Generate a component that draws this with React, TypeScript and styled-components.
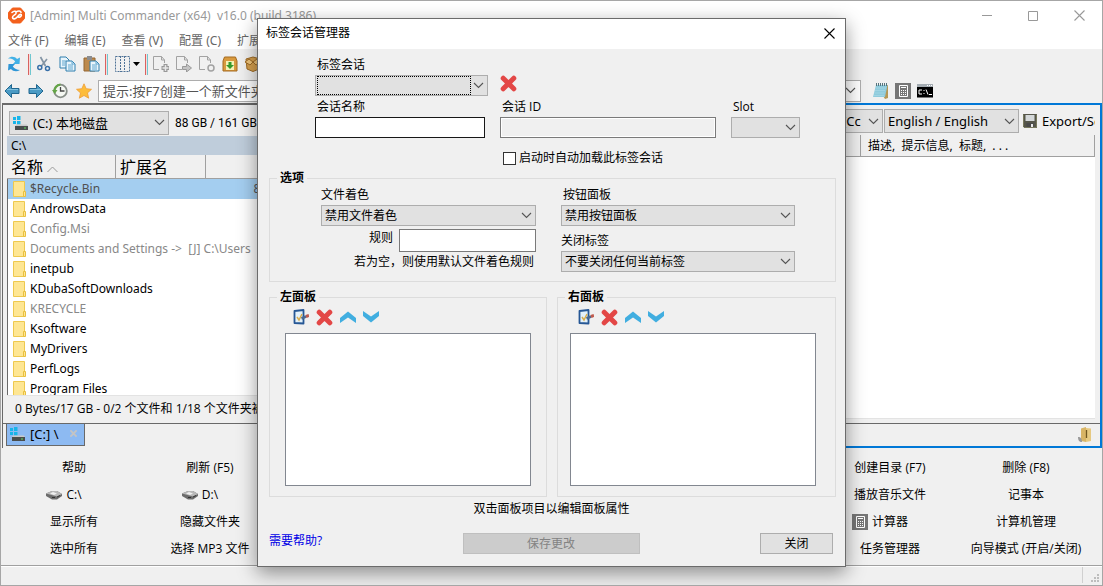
import React from "react";
import styled, { createGlobalStyle, css } from "styled-components";

const latin = '"Noto Sans", "Noto Sans CJK SC", sans-serif';
const narrow = '"Open Sans", "Noto Sans CJK SC", sans-serif';

const GlobalStyle = createGlobalStyle`
  * { box-sizing: border-box; }
  body { margin: 0; background: #f0f0f0; font: 12px/16px ${narrow}; color: #000; }
  button, input, select { font: inherit; color: inherit; margin: 0; border-radius: 0; }
  svg { display: block; flex: none; }
`;

/* ---------- main window ---------- */

const Window = styled.div`
  position: relative;
  display: flex;
  flex-direction: column;
  height: 100vh;
  min-height: 580px;
  overflow: hidden;
  border: 1px solid #a6a6a6;
  background: #f0f0f0;
`;

const TitleBar = styled.header`
  display: flex;
  align-items: center;
  height: 29px;
  padding-left: 7px;
  gap: 5px;
  background: #fff;
  color: #999;
  font: 12px/18px ${latin};
  white-space: pre;
`;

const Caption = styled.span`
  flex: 1;
`;

const WindowButtons = styled.div`
  display: flex;
`;

const WindowButton = styled.button`
  display: grid;
  place-items: center;
  width: 46px;
  height: 29px;
  padding: 0;
  border: 0;
  background: none;
`;

const MenuBar = styled.nav`
  display: flex;
  align-items: center;
  gap: 16px;
  height: 19px;
  padding: 2px 0 0 7px;
  background: #fff;
`;

const MenuItem = styled.button`
  padding: 0;
  border: 0;
  background: none;
  color: #666;
  font: 12px/16px ${latin};
  white-space: nowrap;
`;

const Toolbar = styled.div`
  display: flex;
  align-items: center;
  height: 28px;
  padding: 2px 0 0 4px;
  gap: 7px;
`;

const AddressBar = styled.div`
  display: flex;
  align-items: center;
  gap: 6px;
  height: 26px;
  padding: 1px 169px 0 3px;
`;

const NavButtons = styled.div`
  display: flex;
  gap: 8px;
`;

const ToolButton = styled.button<{ $height?: number }>`
  display: flex;
  align-items: center;
  flex: none;
  gap: 2px;
  height: ${(p) => (p.$height ? `${p.$height}px` : "auto")};
  padding: 0;
  border: 0;
  background: none;
`;

const ToolSeparator = styled.span`
  width: 3px;
  height: 21px;
  margin: 0 -2px;
  border-left: 1px solid #d9625f;
  border-right: 1px solid #6fc7d0;
  background: #f8dcdc;
`;

const AddressField = styled.div`
  display: flex;
  align-items: center;
  flex: 1;
  height: 22px;
  margin-right: 6px;
  padding-right: 4px;
  border: 1px solid #adadad;
  background: #fff;
`;

const AddressInput = styled.input`
  flex: 1;
  min-width: 0;
  padding: 0 4px;
  border: 0;
  outline: 0;
  color: #555;
  font: 13px/18px ${latin};
`;

/* ---------- drop-down ---------- */

const SelectFrame = styled.span<{ $width?: string }>`
  display: grid;
  align-items: center;
  flex: none;
  width: ${(p) => p.$width ?? "100%"};
  & > * { grid-area: 1 / 1; }
  & > svg { justify-self: end; margin-right: 4px; pointer-events: none; }
`;

const SelectBox = styled.select<{ $tall?: boolean; $indent?: number }>`
  appearance: none;
  width: 100%;
  height: ${(p) => (p.$tall ? 24 : 21)}px;
  padding: 0 18px 0 ${(p) => p.$indent ?? 3}px;
  border: 1px solid #adadad;
  background: #e1e1e1;
  outline: 0;
`;

const FocusMark = styled.span`
  align-self: stretch;
  margin: 1px 17px 1px 2px;
  border: 1px dotted #000;
  pointer-events: none;
`;

const DriveMark = styled.span`
  justify-self: start;
  margin-left: 4px;
  pointer-events: none;
`;

/* ---------- file panels ---------- */

const Panels = styled.main`
  display: flex;
  flex: 1;
  min-height: 0;
  padding-left: 1px;
`;

const Panel = styled.section<{ $active?: boolean }>`
  display: flex;
  flex: 1 1 0;
  flex-direction: column;
  min-width: 0;
  ${(p) =>
    p.$active
      ? css`border: 2px solid #0078d7;`
      : css`border: solid #696969; border-width: 2px 0 0 1px;`}
`;

const PanelTools = styled.div<{ $end?: boolean }>`
  display: flex;
  align-items: center;
  justify-content: ${(p) => (p.$end ? "flex-end" : "flex-start")};
  gap: ${(p) => (p.$end ? 1 : 6)}px;
  flex: none;
  height: ${(p) => (p.$end ? 30 : 31)}px;
  padding: ${(p) => (p.$end ? "2px 5px 0 0" : "4px 0 0 6px")};
  overflow: hidden;
  font: 13px/18px ${latin};
  white-space: nowrap;
`;

const FreeSpace = styled.span`
  font: 12px/16px Roboto, "Noto Sans CJK SC", sans-serif;
`;

const ExportButton = styled.button`
  display: flex;
  align-items: center;
  gap: 5px;
  width: 75px;
  padding: 0 0 0 3px;
  border: 0;
  background: none;
  overflow: hidden;
  white-space: nowrap;
`;

const PathBar = styled.div`
  flex: none;
  height: 19px;
  margin-left: 4px;
  padding-left: 4px;
  background: #bfcddb;
  font: 12px/19px ${latin};
`;

const ListArea = styled.div<{ $plain?: boolean }>`
  flex: 1;
  min-height: 0;
  overflow: hidden;
  margin: ${(p) => (p.$plain ? "0 5px 4px 4px" : "0 0 0 4px")};
  background: #fff;
  border-bottom: 1px solid #e3e3e3;
`;

const FileTable = styled.table`
  width: 100%;
  table-layout: fixed;
  border-collapse: separate;
  border-spacing: 0;
  font: 12px/18px ${latin};
`;

const HeadCell = styled.th<{ $width?: number; $small?: boolean }>`
  width: ${(p) => (p.$width ? `${p.$width}px` : "auto")};
  height: ${(p) => (p.$small ? 22 : 24)}px;
  padding: 0 0 0 ${(p) => (p.$small ? 7 : 4)}px;
  border-right: 1px solid #a0a0a0;
  border-bottom: 1px solid #a0a0a0;
  background: #f0f0f0;
  font-size: ${(p) => (p.$small ? 12 : 16)}px;
  font-weight: 400;
  text-align: left;
  white-space: pre;
  & > svg { display: inline; margin-left: 4px; }
`;

const FileRow = styled.tr<{ $hidden?: boolean; $selected?: boolean }>`
  height: 20px;
  background: ${(p) => (p.$selected ? "#a4cef0" : "#fff")};
  color: ${(p) => (p.$selected ? "#505050" : p.$hidden ? "#888" : "#000")};
`;

const FileCell = styled.td<{ $right?: boolean }>`
  padding: 0;
  white-space: pre;
  text-align: ${(p) => (p.$right ? "right" : "left")};
  &:first-child { border-left: 1px solid #696969; }
`;

const FileName = styled.span`
  display: flex;
  align-items: center;
  gap: 4px;
  height: 20px;
  padding-left: 5px;
`;

const PanelStatus = styled.div`
  flex: none;
  height: 27px;
  padding: 0 0 0 12px;
  font: 12px/25px ${narrow};
  white-space: nowrap;
`;

const TabStrip = styled.div<{ $end?: boolean }>`
  display: flex;
  align-items: center;
  justify-content: ${(p) => (p.$end ? "flex-end" : "flex-start")};
  flex: none;
  height: ${(p) => (p.$end ? 23 : 25)}px;
  padding: ${(p) => (p.$end ? "0 8px 0 0" : "0 0 2px 3px")};
  border-top: 1px solid #696969;
`;

const Tab = styled.button`
  display: flex;
  align-items: center;
  gap: 5px;
  width: 79px;
  height: 22px;
  padding: 0 7px 2px 3px;
  border: 1px solid #696969;
  border-top: 0;
  background: #8dbaf2;
  font: 13px/18px ${latin};
  white-space: nowrap;
`;

const TabText = styled.span`
  flex: 1;
  text-align: left;
`;

/* ---------- command buttons and status bar ---------- */

const CommandGrid = styled.div`
  display: grid;
  grid-template-columns: repeat(8, 1fr);
  grid-auto-rows: 27px;
  flex: none;
  padding: 6px 8px 3px 5px;
`;

const Command = styled.button`
  display: flex;
  align-items: center;
  justify-content: center;
  gap: 4px;
  padding: 0;
  border: 0;
  background: none;
  white-space: nowrap;
  & > svg { margin-left: -20px; }
`;

const StatusBar = styled.footer`
  display: flex;
  align-items: flex-end;
  justify-content: flex-end;
  flex: none;
  height: 20px;
  padding: 0 2px 2px 0;
  border-top: 1px solid #a0a0a0;
  box-shadow: inset 0 1px #fff;
`;

const StatusDivider = styled.span`
  width: 1px;
  height: 16px;
  margin-right: 8px;
  background: #d0d0d0;
`;

/* ---------- dialog ---------- */

const Dialog = styled.div`
  position: absolute;
  top: 17px;
  left: 256px;
  width: 589px;
  border: 1px solid #6b6b6b;
  background: #f0f0f0;
  box-shadow: 0 6px 18px rgba(0, 0, 0, 0.42);
`;

const DialogTitle = styled.div`
  display: flex;
  align-items: center;
  justify-content: space-between;
  height: 30px;
  padding: 0 10px 2px 8px;
  background: #fff;
`;

const DialogBody = styled.div`
  display: flex;
  flex-direction: column;
  padding: 7px 9px 12px 11px;
`;

const SessionArea = styled.div`
  padding-left: 46px;
`;

const FieldRow = styled.div<{ $gap?: number }>`
  display: flex;
  align-items: flex-end;
  gap: ${(p) => p.$gap ?? 15}px;
  margin-bottom: 2px;
`;

const Field = styled.div<{ $width: number }>`
  display: flex;
  flex-direction: column;
  gap: 3px;
  width: ${(p) => p.$width}px;
`;

const FieldLabel = styled.label<{ $flush?: boolean }>`
  height: 16px;
  padding-left: ${(p) => (p.$flush ? 0 : 2)}px;
  line-height: 18px;
  white-space: nowrap;
`;

const TextInput = styled.input<{ $focus?: boolean; $tall?: boolean }>`
  width: 100%;
  height: ${(p) => (p.$tall ? 23 : 21)}px;
  padding: 0 3px;
  border: 1px solid ${(p) => (p.$focus ? "#171717" : "#7a7a7a")};
  background: #fff;
  outline: 0;
  &:disabled { background: #f0f0f0; box-shadow: inset 0 0 0 1px #fff; }
`;

const CheckLabel = styled.label`
  display: flex;
  align-items: center;
  gap: 3px;
  height: 16px;
  margin: 12px 0 4px 188px;
  line-height: 18px;
`;

const CheckBox = styled.input`
  appearance: none;
  width: 13px;
  height: 13px;
  border: 1px solid #333;
  background: #fff;
`;

const Group = styled.fieldset`
  min-width: 0;
  margin: 0;
  padding: 0 15px 9px 7px;
  border: 1px solid #dcdcdc;
`;

const GroupTitle = styled.legend`
  padding: 0 3px;
  font-weight: 700;
  line-height: 16px;
`;

const OptionColumns = styled.div`
  display: grid;
  grid-template-columns: 215px 234px;
  gap: 25px;
  padding-left: 44px;
`;

const OptionColumn = styled.div`
  display: flex;
  flex-direction: column;
  gap: 3px;
`;

const SpacedLabel = styled(FieldLabel)`
  margin-top: 3px;
`;

const RuleRow = styled.div`
  display: grid;
  grid-template-columns: 1fr 137px;
  gap: 6px;
  & > label { text-align: right; }
`;

const Hint = styled.span`
  margin-top: -1px;
  padding-right: 2px;
  text-align: right;
`;

const PanelGroups = styled.div`
  display: grid;
  grid-template-columns: 278fr 279fr;
  gap: 10px;
  margin-top: 7px;
`;

const PanelGroup = styled(Group)`
  padding: 4px 0 10px 7px;
`;

const PanelGroupBody = styled.div<{ $indent: number }>`
  width: 246px;
  margin-left: ${(p) => p.$indent}px;
`;

const IconRow = styled.div`
  display: flex;
  gap: 7px;
  height: 16px;
  margin: 0 0 8px 8px;
`;

const ItemList = styled.div`
  height: 153px;
  border: 1px solid #828790;
  background: #fff;
`;

const Note = styled.p`
  margin: 4px 2px 16px 0;
  text-align: center;
`;

const DialogFooter = styled.div`
  display: grid;
  grid-template-columns: 1fr 177px 1fr;
  align-items: start;
  padding-right: 3px;
`;

const HelpLink = styled.a`
  color: #0000e6;
  text-decoration: none;
`;

const PushButton = styled.button<{ $narrow?: boolean }>`
  justify-self: end;
  width: ${(p) => (p.$narrow ? "73px" : "100%")};
  height: 21px;
  padding: 0;
  border: 1px solid #adadad;
  background: #e1e1e1;
  &:disabled { border-color: #bfbfbf; background: #ccc; color: #838383; }
`;

/* ---------- icons ---------- */

const Svg = ({ w = 16, h = 16, box, children }: { w?: number; h?: number; box?: string; children: React.ReactNode }) => (
  <svg width={w} height={h} viewBox={box ?? `0 0 ${w} ${h}`} fill="none" aria-hidden="true">
    {children}
  </svg>
);

const Chevron = () => (
  <Svg w={11} h={7}><path d="M1 1l4.500 4.500L10 1" stroke="#555" strokeWidth="1.100" /></Svg>
);

const SortMark = () => (
  <Svg w={11} h={7}><path d="M0.500 6l5-5 5 5" stroke="#999" /></Svg>
);

const AppLogo = () => (
  <Svg w={17} h={17}>
    <path d="M4.500 1h8l4 4.500v6L12.500 16h-8L.5 11.500v-6z" fill="#f3601c" stroke="#f3601c" strokeLinejoin="round" />
    <path d="M4 5.500C6 3.500 8.500 4 8 6.200 7.500 8 4.500 8.300 4.500 10.200c0 2 2.500 2.200 4 .6l3-3.200c1.500-1.200 2.600.5 1.300 1.800-1 1-2 .8-2 .8M8 5c2.500-1.600 4.500-1.200 5 .3" stroke="#fff" strokeWidth="1.600" strokeLinecap="round" />
  </Svg>
);

const Cross = ({ color = "#000", size = 11, weight = 1.1 }: { color?: string; size?: number; weight?: number }) => (
  <Svg w={size} h={size} box="0 0 11 11"><path d="M.5.5l10 10M10.500.5l-10 10" stroke={color} strokeWidth={weight} /></Svg>
);

const RefreshIcon = () => (
  <Svg w={18} h={18}>
    <path d="M3 3.500C6 1 10 1.500 12 4l3-1.500-.5 6.500H8l2.200-2.500C8.500 4 6 3.500 3 3.500z" fill="#43b1e6" />
    <path d="M15 15c-3 2-7 1.500-9-1l-3 1.500L3.500 9H10l-2.200 2.500C9.500 14 12 14.800 15 15z" fill="#2f96d6" />
  </Svg>
);

const ScissorsIcon = () => (
  <Svg>
    <path d="M4.500 1l5 9M11 3L5 10.500" stroke="#8495a5" strokeWidth="1.700" />
    <circle cx="3.800" cy="11.500" r="2" stroke="#376fa8" strokeWidth="1.500" />
    <circle cx="11.500" cy="12.500" r="2" stroke="#376fa8" strokeWidth="1.500" />
  </Svg>
);

const CopyIcon = () => (
  <Svg w={17}>
    <path d="M1 1h6l3 3v8H1z" fill="#e9f5fc" stroke="#2e7fae" />
    <path d="M7 5h6l3 3v7H7z" fill="#e9f5fc" stroke="#2e7fae" />
    <path d="M3 5h4M3 7h3M3 9h3M9 9h5M9 11h5M9 13h5M13 5v3h3" stroke="#63a8d0" />
  </Svg>
);

const PasteIcon = () => (
  <Svg w={17}>
    <path d="M1 2h11v13H1z" fill="#bd8a4d" stroke="#946632" />
    <path d="M4 0h5v4H4z" fill="#8b8d90" />
    <path d="M7 5h6l3 3v7H7z" fill="#e9f5fc" stroke="#2e7fae" />
    <path d="M9 9h5M9 11h5M9 13h5M13 5v3h3" stroke="#63a8d0" />
  </Svg>
);

const ColumnsIcon = () => (
  <Svg w={18}><path d="M2.500.5h14v15h-14zM7.500 0v16M11.500 0v16" stroke="#4e7297" strokeDasharray="2 1" /></Svg>
);

const DropArrow = () => (
  <Svg w={7} h={4}><path d="M0 0h7L3.500 4z" fill="#000" /></Svg>
);

const PageIcon = ({ kind }: { kind: "add" | "move" | "copy" }) => (
  <Svg>
    <path d="M11.500 7V4l-3-3.500h-8v13H6M8.500.5V4h3" stroke="#a2a2a2" />
    {kind === "add" && (
      <>
        <path d="M12.500 8v8M8.500 12h8" stroke="#999" strokeWidth="4" />
        <path d="M12.500 9v6M9.500 12h6" stroke="#e8e8e8" strokeWidth="1.500" />
      </>
    )}
    {kind === "move" && <path d="M6.500 10.500h4V8l5 4-5 4v-2.500h-4z" fill="#c4c4c4" stroke="#999" />}
    {kind === "copy" && <circle cx="12" cy="12" r="3" stroke="#a2a2a2" strokeWidth="1.500" />}
  </Svg>
);

const UnpackIcon = () => (
  <Svg>
    <path d="M2.500 1h11L15 5v10H1V5z" fill="#d99a3e" stroke="#a46a20" />
    <path d="M4 5h8v9H4z" fill="#f5f2b5" />
    <path d="M6.500 6h3v3h2.500l-4 4-4-4h2.500z" fill="#35992b" />
  </Svg>
);

const BoxIcon = () => (
  <Svg>
    <path d="M1 3l7-2 7 2-1 10-6 2.500L2 13z" fill="#d6a04e" stroke="#9d6a25" />
    <path d="M0 6l4-3 4 3-3 3zM16 6l-4-3-4 3 3 3z" fill="#f0c67c" stroke="#9d6a25" />
  </Svg>
);

const ArrowIcon = ({ right }: { right?: boolean }) => (
  <Svg w={16}>
    <path d={right ? "M15 8L8.500 1.500v4H1v5h7.500v4z" : "M1 8l6.500-6.500v4H15v5H7.500v4z"} fill="#4a9ac4" stroke="#20668f" />
    <path d={right ? "M2 6.500h11" : "M3 6.500h11"} stroke="#7fc0df" />
  </Svg>
);

const ClockIcon = () => (
  <Svg>
    <circle cx="8.500" cy="8" r="6.300" fill="#f5f8f2" stroke="#888f88" strokeWidth="1.800" />
    <path d="M8.500 1.700A6.300 6.300 0 0 0 2.500 9" stroke="#65a548" strokeWidth="2.200" />
    <path d="M0 7h5.500l-2.700 4z" fill="#65a548" />
    <path d="M8.500 4v4h4" stroke="#444" strokeWidth="1.300" />
  </Svg>
);

const StarIcon = () => (
  <Svg><path d="M8 .8l2.200 4.900 5.300.6-4 3.600 1.200 5.300L8 12.500l-4.700 2.700 1.200-5.300-4-3.600 5.300-.6z" fill="#fdbd3b" stroke="#ee9c35" strokeWidth=".8" /></Svg>
);

const NotepadIcon = () => (
  <Svg>
    <path d="M3 2h12v13l-3 1z" fill="#b59754" />
    <path d="M3 2h11.500L12 14H0z" fill="#8fcbdc" />
    <path d="M3 5h10M2 7.500h10M1.500 10h10M1 12.500h10" stroke="#a9d8e5" strokeWidth=".7" />
    <path d="M3.500 0v3M5.500 0v3M7.500 0v3M9.500 0v3M11.500 0v3M13.500 0v3" stroke="#55737c" />
  </Svg>
);

const CalculatorIcon = () => (
  <Svg>
    <path d="M0 0h16v16H0z" fill="#767676" />
    <path d="M4.500 2.500h8v11h-8z" stroke="#fff" />
    <path d="M6 4.500h5" stroke="#fff" />
    <path d="M6 7.500h5M6 9.500h5M6 11.500h5" stroke="#fff" strokeDasharray="1 1" />
  </Svg>
);

const ConsoleIcon = () => (
  <Svg w={16} h={14}>
    <path d="M0 .5h16v13H0z" fill="#000" />
    <path d="M0 0h16v3H0z" fill="#a4acb2" />
    <path d="M10 1.500h1M12 1.500h1M14 1.500h1" stroke="#fff" />
    <path d="M5 6H2v4h3M6.500 6.500h1M6.500 9.500h1M9 5.500l2 5M12 10.500h3" stroke="#fff" />
  </Svg>
);

const DriveIcon = () => (
  <Svg w={15} h={14}>
    <path d="M0 1h3v3H0zM4 0h3.500v4H4zM0 5h3v3H0zM4 5h3.500v3.500H4z" fill="#18b5ea" />
    <path d="M3 8.500h11l1 2H2z" fill="#c9c9c9" />
    <path d="M2 10h13v4H2z" fill="#4a4d4d" />
    <path d="M11 12h2" stroke="#5ee05e" />
  </Svg>
);

const DiskIcon = () => (
  <Svg w={16} h={10}>
    <path d="M0 3.500L6 1h5l5 3v2l-5 3.500H6L0 6z" fill="#6c6c6c" />
    <path d="M0 3.500L6 1h5l5 3-5 2.500z" fill="#b8b8b8" />
    <path d="M4 3.500l3-1.500 4 1.500-3 1.500z" fill="#efefef" />
    <path d="M6 7.500h3M11 7l3-1.500" stroke="#333" />
  </Svg>
);

const FloppyIcon = () => (
  <Svg w={14} h={14}>
    <path d="M0 0h14v14H1.500L0 12.500z" fill="#55564a" />
    <path d="M2.500 1h9v6h-9z" fill="#d4d8d9" />
    <path d="M3.500 9h7v5h-7z" fill="#4a4a4a" />
    <path d="M8 10h2v3H8z" fill="#e9e9e9" />
    <path d="M.5.5v12l1 1h12V.5" stroke="#77785c" />
  </Svg>
);

const FolderIcon = () => (
  <Svg w={13} h={16}>
    <path d="M.5.500h11v15H.5z" fill="#fee693" stroke="#eec94e" />
    <path d="M10.500 10.500h2v5h-2z" fill="#fee693" stroke="#e9bf3f" />
  </Svg>
);

const OpenFolderIcon = () => (
  <Svg w={14} h={16}>
    <path d="M3 1.500L8 0v15l-5-1z" fill="#d8b465" />
    <path d="M8 1l5 .5V14l-5 1z" fill="#e6c981" />
    <path d="M8.500 3v8" stroke="#705620" strokeWidth="1.300" />
    <path d="M0 10c3 0 4 2 4 5-3 0-4-2-4-5z" fill="#999" />
  </Svg>
);

const RedCrossIcon = () => (
  <Svg w={17} h={17}><path d="M3.200 3.200l10.600 10.600M13.800 3.200L3.200 13.800" stroke="#e34746" strokeWidth="5" strokeLinecap="round" /></Svg>
);

const EditIcon = () => (
  <Svg w={16}>
    <path d="M1.500 2l9-1v13.500l-9-.5z" fill="#e3f1fa" stroke="#265795" strokeWidth="1.800" strokeLinejoin="round" />
    <path d="M4 8l2 3 3-6" stroke="#d9ad4c" strokeWidth="1.500" />
    <path d="M8.500 9.500l4.500-2" stroke="#4a6a91" strokeWidth="2.500" />
    <path d="M13 7.500l3-1" stroke="#bf5a4d" strokeWidth="3" />
  </Svg>
);

const MoveIcon = ({ down }: { down?: boolean }) => (
  <Svg>
    <path d={down ? "M0 2l8 5.500L16 2v5l-8 6.500L0 7z" : "M0 14l8-5.500 8 5.500V9L8 2.500 0 9z"} fill="#41aee0" />
  </Svg>
);

const GripIcon = () => (
  <Svg w={9} h={9}>
    <path d="M6 0h2v2H6zM3 3h2v2H3zM6 3h2v2H6zM0 6h2v2H0zM3 6h2v2H3zM6 6h2v2H6z" fill="#bdbdbd" />
  </Svg>
);

/* ---------- content ---------- */

type Entry = { name: string; hidden?: boolean; selected?: boolean; size?: string };

const entries: Entry[] = [
  { name: "$Recycle.Bin", hidden: true, selected: true, size: "8 192" },
  { name: "AndrowsData" },
  { name: "Config.Msi", hidden: true },
  { name: "Documents and Settings ->  [J] C:\\Users", hidden: true },
  { name: "inetpub" },
  { name: "KDubaSoftDownloads" },
  { name: "KRECYCLE", hidden: true },
  { name: "Ksoftware" },
  { name: "MyDrivers" },
  { name: "PerfLogs" },
  { name: "Program Files" },
];

type CommandItem = { text: string; icon?: React.ReactNode } | null;

const blanks: CommandItem[] = [null, null, null, null];

const commands: CommandItem[] = [
  { text: "帮助" }, { text: "刷新 (F5)" }, ...blanks, { text: "创建目录 (F7)" }, { text: "删除 (F8)" },
  { text: "C:\\", icon: <DiskIcon /> }, { text: "D:\\", icon: <DiskIcon /> }, ...blanks, { text: "播放音乐文件" }, { text: "记事本" },
  { text: "显示所有" }, { text: "隐藏文件夹" }, ...blanks, { text: "计算器", icon: <CalculatorIcon /> }, { text: "计算机管理" },
  { text: "选中所有" }, { text: "选择 MP3 文件" }, ...blanks, { text: "任务管理器" }, { text: "向导模式 (开启/关闭)" },
];

const menus = ["文件 (F)", "编辑 (E)", "查看 (V)", "配置 (C)", "扩展 (X)"];

type DropDownProps = {
  id?: string;
  label?: string;
  value?: string;
  width?: string;
  tall?: boolean;
  focused?: boolean;
  drive?: boolean;
};

const DropDown = ({ id, label, value = "", width, tall, focused, drive }: DropDownProps) => (
  <SelectFrame $width={width}>
    <SelectBox id={id} aria-label={label} $tall={tall} $indent={drive ? 23 : undefined}>
      <option>{value}</option>
    </SelectBox>
    {drive && <DriveMark><DriveIcon /></DriveMark>}
    {focused && <FocusMark />}
    <Chevron />
  </SelectFrame>
);

const LeftPanel = () => (
  <Panel>
    <PanelTools>
      <DropDown label="驱动器" value="(C:) 本地磁盘" width="160px" tall drive />
      <FreeSpace>88 GB / 161 GB 可用</FreeSpace>
    </PanelTools>
    <PathBar>C:\</PathBar>
    <ListArea>
      <FileTable>
        <thead>
          <tr>
            <HeadCell $width={109}>名称<SortMark /></HeadCell>
            <HeadCell $width={90}>扩展名</HeadCell>
            <HeadCell $width={78} />
            <HeadCell />
          </tr>
        </thead>
        <tbody>
          {entries.map((e) => (
            <FileRow key={e.name} $hidden={e.hidden} $selected={e.selected}>
              <FileCell><FileName><FolderIcon />{e.name}</FileName></FileCell>
              <FileCell />
              <FileCell $right>{e.size}</FileCell>
              <FileCell />
            </FileRow>
          ))}
        </tbody>
      </FileTable>
    </ListArea>
    <PanelStatus>0 Bytes/17 GB - 0/2 个文件和 1/18 个文件夹被选中</PanelStatus>
    <TabStrip>
      <Tab><DriveIcon /><TabText>[C:] \</TabText><Cross color="#c4c4c4" size={7} weight={3} /></Tab>
    </TabStrip>
  </Panel>
);

const RightPanel = () => (
  <Panel $active>
    <PanelTools $end>
      <DropDown label="编码" value="简体中文 (Cc" width="100px" tall />
      <DropDown label="语言" value="English / English" width="135px" tall />
      <ExportButton><FloppyIcon />Export/Send</ExportButton>
    </PanelTools>
    <ListArea $plain>
      <FileTable>
        <thead>
          <tr>
            <HeadCell $small />
            <HeadCell $small $width={234}>描述,  提示信息,  标题,  . . .</HeadCell>
          </tr>
        </thead>
      </FileTable>
    </ListArea>
    <TabStrip $end><OpenFolderIcon /></TabStrip>
  </Panel>
);

const PanelItems = ({ title, indent }: { title: string; indent: number }) => (
  <PanelGroup>
    <GroupTitle>{title}</GroupTitle>
    <PanelGroupBody $indent={indent}>
      <IconRow>
        <ToolButton aria-label="编辑"><EditIcon /></ToolButton>
        <ToolButton aria-label="删除"><RedCrossIcon /></ToolButton>
        <ToolButton aria-label="上移"><MoveIcon /></ToolButton>
        <ToolButton aria-label="下移"><MoveIcon down /></ToolButton>
      </IconRow>
      <ItemList />
    </PanelGroupBody>
  </PanelGroup>
);

const SessionDialog = () => (
  <Dialog role="dialog" aria-labelledby="dialog-title">
    <DialogTitle>
      <span id="dialog-title">标签会话管理器</span>
      <ToolButton aria-label="关闭"><Cross /></ToolButton>
    </DialogTitle>
    <DialogBody>
      <SessionArea>
        <FieldRow $gap={12}>
          <Field $width={173}>
            <FieldLabel htmlFor="session">标签会话</FieldLabel>
            <DropDown id="session" focused />
          </Field>
          <ToolButton aria-label="删除会话" $height={25}><RedCrossIcon /></ToolButton>
        </FieldRow>
        <FieldRow>
          <Field $width={170}>
            <FieldLabel htmlFor="session-name">会话名称</FieldLabel>
            <TextInput id="session-name" $focus />
          </Field>
          <Field $width={216}>
            <FieldLabel htmlFor="session-id">会话 ID</FieldLabel>
            <TextInput id="session-id" disabled />
          </Field>
          <Field $width={69}>
            <FieldLabel htmlFor="slot">Slot</FieldLabel>
            <DropDown id="slot" />
          </Field>
        </FieldRow>
        <CheckLabel><CheckBox type="checkbox" />启动时自动加载此标签会话</CheckLabel>
      </SessionArea>
      <Group>
        <GroupTitle>选项</GroupTitle>
        <OptionColumns>
          <OptionColumn>
            <FieldLabel htmlFor="coloring" $flush>文件着色</FieldLabel>
            <DropDown id="coloring" value="禁用文件着色" />
            <RuleRow>
              <FieldLabel htmlFor="rule">规则</FieldLabel>
              <TextInput id="rule" $tall />
            </RuleRow>
            <Hint>若为空，则使用默认文件着色规则</Hint>
          </OptionColumn>
          <OptionColumn>
            <FieldLabel htmlFor="buttons">按钮面板</FieldLabel>
            <DropDown id="buttons" value="禁用按钮面板" />
            <SpacedLabel htmlFor="closing" $flush>关闭标签</SpacedLabel>
            <DropDown id="closing" value="不要关闭任何当前标签" />
          </OptionColumn>
        </OptionColumns>
      </Group>
      <PanelGroups>
        <PanelItems title="左面板" indent={8} />
        <PanelItems title="右面板" indent={5} />
      </PanelGroups>
      <Note>双击面板项目以编辑面板属性</Note>
      <DialogFooter>
        <HelpLink href="#help">需要帮助?</HelpLink>
        <PushButton disabled>保存更改</PushButton>
        <PushButton $narrow>关闭</PushButton>
      </DialogFooter>
    </DialogBody>
  </Dialog>
);

export default function App() {
  return (
    <>
      <GlobalStyle />
      <Window>
        <TitleBar>
          <AppLogo />
          <Caption>[Admin] Multi Commander (x64)  v16.0 (build 3186)</Caption>
          <WindowButtons>
            <WindowButton aria-label="最小化"><Svg w={10} h={1}><path d="M0 .5h10" stroke="#999" /></Svg></WindowButton>
            <WindowButton aria-label="最大化"><Svg w={10} h={10}><path d="M.5.500h9v9h-9z" stroke="#999" /></Svg></WindowButton>
            <WindowButton aria-label="关闭窗口"><Cross color="#999" /></WindowButton>
          </WindowButtons>
        </TitleBar>
        <MenuBar>{menus.map((m) => <MenuItem key={m}>{m}</MenuItem>)}</MenuBar>
        <Toolbar>
          <ToolButton aria-label="刷新"><RefreshIcon /></ToolButton>
          <ToolSeparator />
          <ToolButton aria-label="剪切"><ScissorsIcon /></ToolButton>
          <ToolButton aria-label="复制"><CopyIcon /></ToolButton>
          <ToolButton aria-label="粘贴"><PasteIcon /></ToolButton>
          <ToolSeparator />
          <ToolButton aria-label="列"><ColumnsIcon /><DropArrow /></ToolButton>
          <ToolSeparator />
          <ToolButton aria-label="新建文件"><PageIcon kind="add" /></ToolButton>
          <ToolButton aria-label="移动文件"><PageIcon kind="move" /></ToolButton>
          <ToolButton aria-label="复制文件"><PageIcon kind="copy" /></ToolButton>
          <ToolButton aria-label="解压"><UnpackIcon /></ToolButton>
          <ToolButton aria-label="打包"><BoxIcon /></ToolButton>
        </Toolbar>
        <AddressBar>
          <NavButtons>
            <ToolButton aria-label="后退"><ArrowIcon /></ToolButton>
            <ToolButton aria-label="前进"><ArrowIcon right /></ToolButton>
            <ToolButton aria-label="历史"><ClockIcon /></ToolButton>
            <ToolButton aria-label="收藏"><StarIcon /></ToolButton>
          </NavButtons>
          <AddressField>
            <AddressInput aria-label="命令" defaultValue="提示:按F7创建一个新文件夹" />
            <Chevron />
          </AddressField>
          <ToolButton aria-label="记事本"><NotepadIcon /></ToolButton>
          <ToolButton aria-label="计算器"><CalculatorIcon /></ToolButton>
          <ToolButton aria-label="命令行"><ConsoleIcon /></ToolButton>
        </AddressBar>
        <Panels>
          <LeftPanel />
          <RightPanel />
        </Panels>
        <CommandGrid>
          {commands.map((c, i) => (c ? <Command key={i}>{c.icon}{c.text}</Command> : <span key={i} />))}
        </CommandGrid>
        <StatusBar>
          <StatusDivider />
          <GripIcon />
        </StatusBar>
        <SessionDialog />
      </Window>
    </>
  );
}
